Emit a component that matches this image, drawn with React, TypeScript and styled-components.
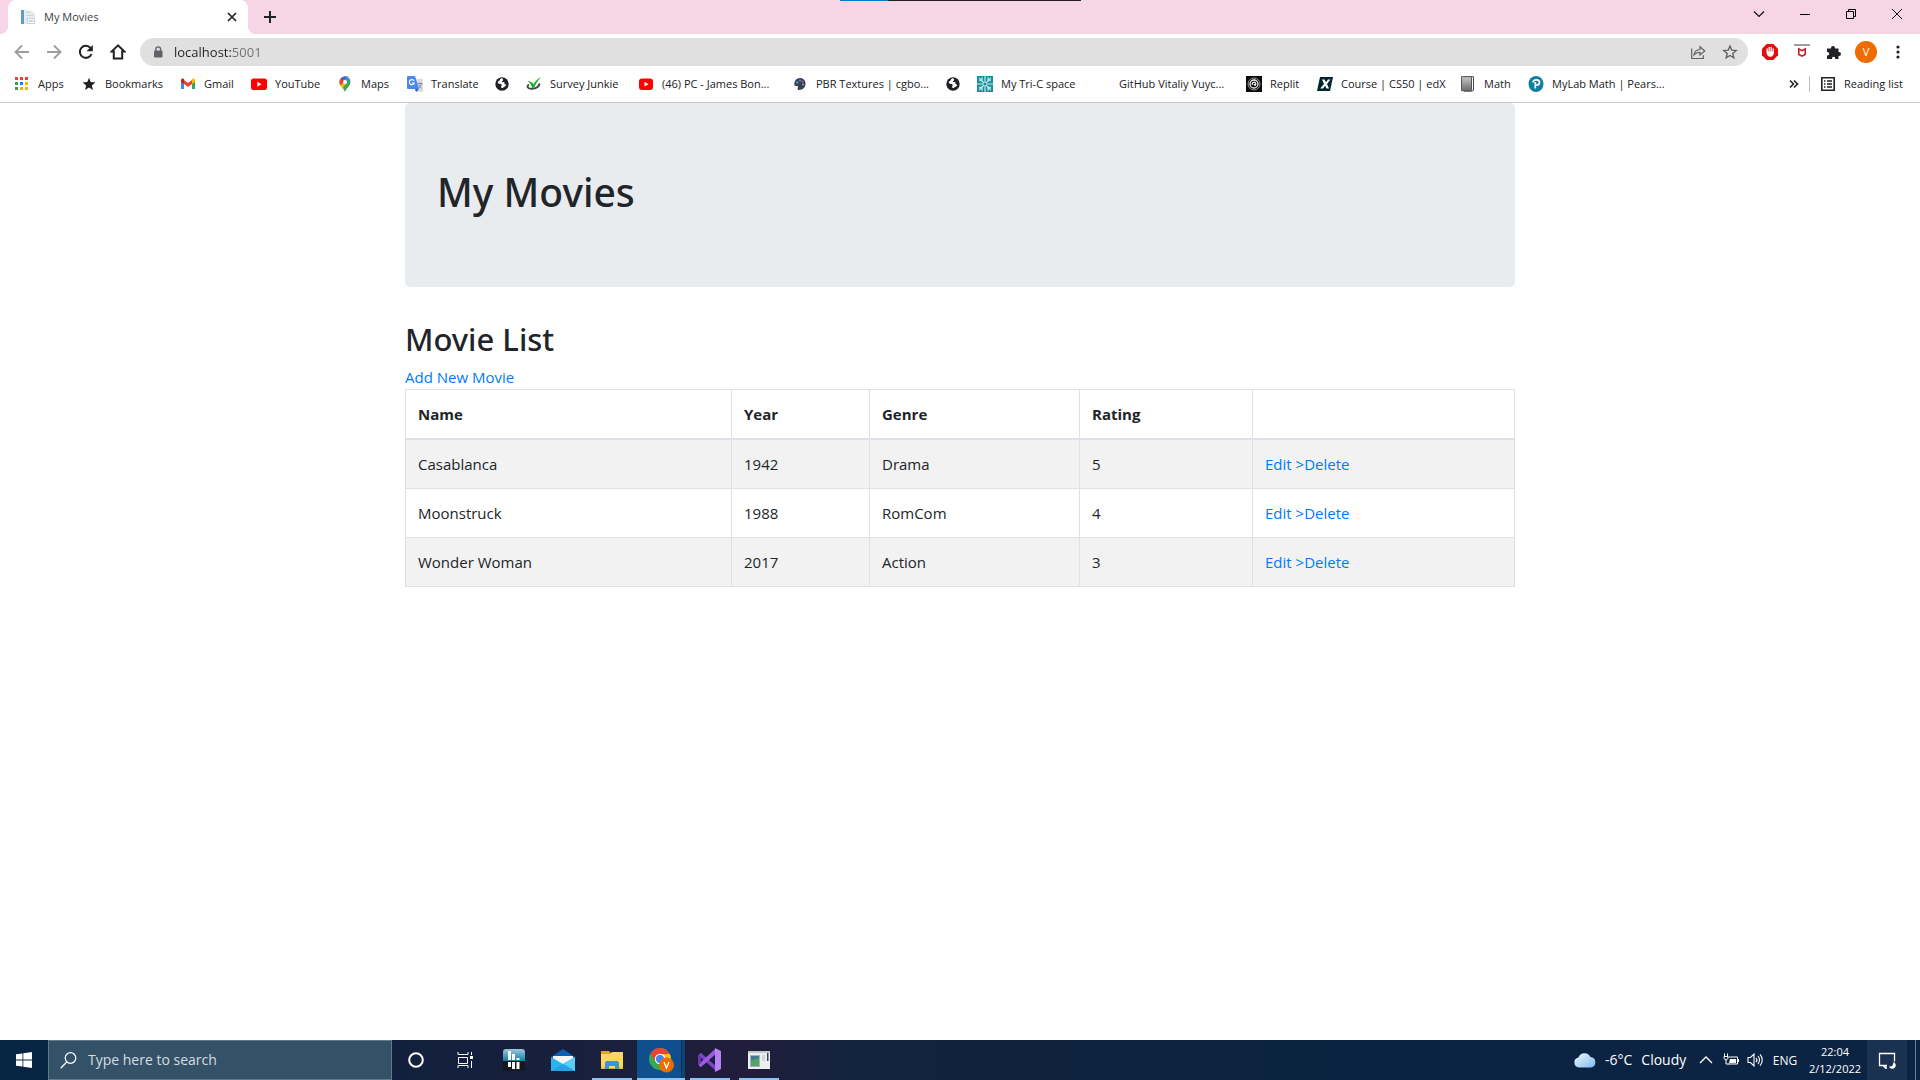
import React from 'react';
import styled, { createGlobalStyle } from 'styled-components';

const GlobalStyle = createGlobalStyle`
  *, *::before, *::after { box-sizing: border-box; }
  body {
    margin: 0;
    background: #fff;
    color: #212529;
    font-family: "Segoe UI", "Open Sans", "Noto Sans", sans-serif;
    font-size: 15px;
    line-height: 24px;
  }
  button, input { font: inherit; color: inherit; }
  svg { display: block; flex: none; }
`;

const Screen = styled.div`
  display: flex;
  flex-direction: column;
  min-height: 100vh;
`;

/* ---------- Browser window ---------- */

const TabStrip = styled.header`
  display: flex;
  align-items: flex-end;
  height: 34px;
  padding-left: 8px;
  background: #f6d5e4;
  position: relative;
`;

const LoadStrip = styled.div`
  position: absolute;
  top: 0;
  left: 43.75%;
  width: 241px;
  height: 1px;
  background: linear-gradient(90deg, #0078d7 48px, #231f20 48px);
`;

const Tab = styled.div`
  position: relative;
  display: flex;
  align-items: center;
  gap: 8px;
  width: 240px;
  height: 34px;
  padding: 0 8px 0 12px;
  border-radius: 8px 8px 0 0;
  background: #fff;
  font-size: 11px;
  color: #3c4043;

  &::before, &::after {
    content: "";
    position: absolute;
    bottom: 0;
    width: 8px;
    height: 8px;
  }
  &::before {
    left: -8px;
    background: radial-gradient(circle at 0 0, transparent 8px, #fff 8px);
  }
  &::after {
    right: -8px;
    background: radial-gradient(circle at 100% 0, transparent 8px, #fff 8px);
  }
`;

const TabTitle = styled.span`
  flex: 1;
`;

const IconButton = styled.button<{ $w?: number; $h?: number }>`
  display: flex;
  align-items: center;
  justify-content: center;
  flex: none;
  width: ${p => p.$w ?? 32}px;
  height: ${p => p.$h ?? 28}px;
  padding: 0;
  border: 0;
  background: none;
  color: #202124;
`;

const TabTools = styled.div`
  display: flex;
  align-items: center;
  flex: 1;
  height: 34px;
  padding-left: 6px;
`;

const WindowControls = styled.div`
  display: flex;
  align-self: flex-start;
`;

const Toolbar = styled.div`
  display: flex;
  align-items: center;
  height: 36px;
  padding: 0 6px;
`;

const AddressBar = styled.form`
  display: flex;
  align-items: center;
  flex: 1;
  height: 28px;
  margin: 0 6px;
  padding: 0 2px 0 12px;
  border-radius: 14px;
  background: #e0e0e0;
  color: #5f6368;
`;

const AddressInput = styled.input`
  flex: 1;
  min-width: 0;
  height: 24px;
  margin-left: 10px;
  padding: 0;
  border: 0;
  outline: 0;
  font-size: 13px;
  color: transparent;
  background: linear-gradient(90deg, #202124 57px, #6b6f73 57px);
  -webkit-background-clip: text;
  background-clip: text;
`;

const Avatar = styled.span`
  width: 22px;
  height: 22px;
  border-radius: 50%;
  background: #ef6c00;
  color: #fff;
  font-size: 11px;
  line-height: 22px;
  text-align: center;
`;

const BookmarkBar = styled.nav`
  display: flex;
  align-items: center;
  gap: 16px;
  height: 33px;
  padding: 0 14px 4px;
  border-bottom: 1px solid #c8c8c8;
  font-size: 11px;
`;

const Bookmark = styled.a<{ $label?: number }>`
  display: flex;
  align-items: center;
  gap: 8px;
  flex: none;
  padding: 0;
  border: 0;
  background: none;
  color: #202124;
  text-decoration: none;
  text-align: left;
  white-space: nowrap;

  span { width: ${p => p.$label ?? 0}px; }
`;

const BarEnd = styled.div`
  display: flex;
  align-items: center;
  gap: 10px;
  margin-left: auto;
`;

const Divider = styled.span`
  width: 1px;
  height: 16px;
  background: #bdc1c6;
`;

/* ---------- Page ---------- */

const Main = styled.main`
  flex: 1;
  width: 100%;
  max-width: 1110px;
  margin: 0 auto;
`;

const Jumbotron = styled.section`
  margin-bottom: 32px;
  padding: 64px 32px 72px;
  border-radius: 5px;
  background: #e9ecef;
`;

const Title = styled.h1`
  margin: 0;
  font-family: "Segoe UI", "Noto Sans", "Open Sans", sans-serif;
  font-size: 39px;
  font-weight: 500;
  line-height: 50px;
  height: 48px;
`;

const Subtitle = styled.h2`
  margin: 0 0 6px;
  font-family: "Segoe UI", "Noto Sans", "Open Sans", sans-serif;
  font-size: 31px;
  font-weight: 500;
  line-height: 40px;
`;

const PageLink = styled.a`
  color: #007bff;
  text-decoration: none;
`;

const MovieTable = styled.table`
  width: 100%;
  border-collapse: collapse;
  table-layout: fixed;

  th, td {
    height: 49px;
    padding: 12px;
    border: 1px solid #dee2e6;
    text-align: left;
  }
  th { border-bottom-width: 2px; font-weight: 700; }
  tbody tr:nth-child(odd) { background: #f2f2f2; }
`;

const Col = styled.col<{ $share?: number }>`
  width: ${p => (p.$share ? `${p.$share}px` : 'auto')};
`;

/* ---------- Taskbar ---------- */

const TaskBar = styled.footer`
  display: flex;
  height: 40px;
  background: linear-gradient(90deg, #062644 0%, #12203e 21%, #1b1f3c 34%, #211d3b 39%, #12233e 44%, #0b2340 70%, #0c2444 100%);
  color: #fff;
`;

const SearchBox = styled.label`
  display: flex;
  align-items: center;
  gap: 11px;
  width: 344px;
  padding-left: 11px;
  border: 1px solid #607b8a;
  background: #345267;
`;

const SearchInput = styled.input`
  flex: 1;
  min-width: 0;
  padding: 0;
  border: 0;
  outline: 0;
  background: none;
  font-size: 14px;
  &::placeholder { color: #d6dde2; opacity: 1; }
`;

const TaskButtons = styled.div`
  display: flex;
  gap: 1px;
`;

const TaskButton = styled.button<{ $open?: boolean; $active?: boolean }>`
  display: flex;
  align-items: center;
  justify-content: center;
  width: 48px;
  height: 40px;
  padding: 0;
  border: 0;
  color: #fff;
  background:
    linear-gradient(#8dc2f2, #8dc2f2) bottom / ${p => (p.$active ? '48px' : p.$open ? '40px' : '0')} 2px no-repeat,
    ${p => (p.$active ? 'linear-gradient(90deg, #104f8d 44px, #0b2c54 44px, #0b2c54 45px, #104475 45px)' : 'none')};
`;

const Tray = styled.div`
  display: flex;
  align-items: center;
  margin-left: auto;
`;

const Weather = styled.button`
  display: flex;
  align-items: center;
  gap: 9px;
  width: 119px;
  padding: 0;
  border: 0;
  background: none;
  font-size: 14px;
  color: #fff;
  white-space: nowrap;
`;

const TrayButton = styled.button<{ $w: number; $size?: number }>`
  display: flex;
  align-items: center;
  justify-content: center;
  width: ${p => p.$w}px;
  height: 40px;
  padding: 0;
  border: 0;
  background: none;
  font-size: ${p => p.$size ?? 11}px;
  line-height: 17px;
  color: #fff;
`;

const Notifications = styled(TrayButton)`
  background: #1b3150;
`;

const ShowDesktop = styled.button`
  width: 5px;
  height: 40px;
  margin-left: 8px;
  padding: 0;
  border: 0;
  border-left: 1px solid #6d7d92;
  background: none;
`;

/* ---------- Icons ---------- */

const Icon = ({ size = 16, box = 16, children }: { size?: number; box?: number; children: React.ReactNode }) => (
  <svg width={size} height={size} viewBox={`0 0 ${box} ${box}`} fill="none" aria-hidden="true">{children}</svg>
);

const PageFavicon = () => (
  <Icon>
    <path d="M1 1h3v14H1z" fill="#5b9dc4" /><path d="M4 1h7l4 4v10H4z" fill="#e9ebee" />
    <path d="M6 3.500h5M6 6.500h8M6 9.500h2" stroke="#ccd2d9" /><path d="M7.500 9.500h7v5h-7z" fill="#f8f9fa" stroke="#c9cfda" />
    <path d="M9 12h4" stroke="#a4abc6" />
  </Icon>
);

const AppsIcon = () => {
  const colors = ['#ea4335', '#ea4335', '#ea4335', '#34a04f', '#1a82f7', '#fbb000', '#34a04f', '#fbb000', '#fbb000'];
  return (
    <Icon>
      {colors.map((c, i) => <rect key={i} x={1 + (i % 3) * 5} y={1 + Math.floor(i / 3) * 5} width="3" height="3" fill={c} />)}
    </Icon>
  );
};

const StarIcon = () => <Icon><path d="M8 1.800l1.700 4.300 4.700.300-3.600 3L12 14l-4-2.500L4 14l1.200-4.600-3.600-3 4.700-.300z" fill="#202124" /></Icon>;

const GmailIcon = () => (
  <Icon>
    <path d="M1 4.500V13h3V7z" fill="#4285f4" /><path d="M15 4.500V13h-3V7z" fill="#34a853" />
    <path d="M4 4v4l4 3 4-3V4L8 7z" fill="#ea4335" /><path d="M1 4.200C1 2.500 2.900 2.200 4 3.100V8L1 5.700z" fill="#c5221f" />
    <path d="M15 4.200c0-1.700-1.900-2-3-1.100V8l3-2.300z" fill="#fbbc04" />
  </Icon>
);

const YouTubeIcon = () => <Icon><rect y="2.500" width="16" height="11.500" rx="2.500" fill="#f00" /><path d="M6.300 5.700v5l4.200-2.500z" fill="#fff" /></Icon>;

const YouTubeTileIcon = () => <Icon><rect x="1" y="2.500" width="14" height="11.500" rx="3" fill="#f00" /><path d="M6.500 5.800v4.800l4-2.400z" fill="#fff" /></Icon>;

const MapsIcon = () => (
  <Icon>
    <path d="M8 .5A5.500 5.500 0 002.500 6c0 4 4 5.500 5.500 10 1.500-4.500 5.500-6 5.500-10A5.500 5.500 0 008 .5z" fill="#34a853" />
    <path d="M3.800 9.600L11.600.5 8 .4A5.500 5.500 0 002.500 6c0 1.400.5 2.600 1.300 3.600z" fill="#ea4335" />
    <path d="M8 .5A5.500 5.500 0 003.900 2.300L6.500 4.600 9.700.8z" fill="#1a73e8" />
    <path d="M9.700.8L6.600 4.500a2.100 2.100 0 013 3l3.200-4A5.500 5.500 0 009.700.8z" fill="#4285f4" />
    <path d="M3.800 9.600l2.800-3.300L9.600 7.500l-4.200 4.700z" fill="#fbbc04" />
    <circle cx="8" cy="6" r="2" fill="#fff" />
  </Icon>
);

const TranslateIcon = () => (
  <Icon>
    <path d="M5 3h10a1 1 0 011 1v11a1 1 0 01-1 1H9z" fill="#dadce0" /><path d="M1 0h7l4 13H1a1 1 0 01-1-1V1a1 1 0 011-1z" fill="#4a87ee" />
    <path d="M8 13h4l-3 3z" fill="#2a56c6" />
    <path d="M7 4.800A2.500 2.500 0 107.200 7H5" stroke="#fff" strokeWidth="1.200" />
    <path d="M10.500 7.500H15M12.700 6.500v1M14.200 8c-.5 2-1.700 3.300-3 4M11.500 9c.8 1.500 1.800 2.500 3 3.200" stroke="#7b8794" />
  </Icon>
);

const GlobeIcon = () => (
  <Icon>
    <circle cx="8" cy="8" r="6.700" fill="#202124" />
    <path d="M6.800 2.500c-1.300.8-.5 2-2 2.600-1.200.5-1.400 1.800-.3 2.500 1 .6 2 .1 3 1 .8.800-.7 1.500-.3 2.600.3.900 1.200 1.300 2.200.4 1-.9 2.400-.9 2.600-2.300.1-1-1-.9-1.600-1.500-.5-.5.800-1.200-.2-1.700-.8-.4-1.500.5-2.100-.1-.8-.8 1.200-1.200 1-2.300-.1-.8-1.400-1.700-2.300-1.200z" fill="#fff" />
  </Icon>
);

const SurveyIcon = () => (
  <Icon>
    <path d="M3 8.500C0 10.500 2 13 6 12.800c4.500-.2 8-3 7-5.300" stroke="#454545" strokeWidth="2" />
    <path d="M1.500 4.500L6 6.500l1.500 1.800C9 5.500 11.500 3 15 1c-3 3.300-5 6.500-7 11l-1.500.5C5.500 9.500 4 7 1.500 4.500z" fill="#18b128" />
  </Icon>
);

const PaletteIcon = () => (
  <Icon>
    <path d="M8 2A6 5.500 0 002.500 6.500C1.500 9.500 3 10.300 4.500 10c1.800-.3 1.700 1 1.200 2.200-.7 1.600.8 2 2.800 1.600C12 13.200 13.500 10.500 13.500 7.500 13.500 4.300 11 2 8 2z" fill="#34425a" />
    <circle cx="5.200" cy="6.500" r="1" fill="#8ca1bb" /><circle cx="8" cy="4.500" r="1" fill="#5b93c8" />
    <circle cx="10.500" cy="5.500" r="1" fill="#c95c68" /><circle cx="11" cy="8.500" r="1" fill="#8ca1bb" />
  </Icon>
);

const TriCIcon = () => (
  <Icon>
    <path d="M0 0h16v16H0z" fill="#168e9a" />
    <path d="M8 0v16M0 8h16M2 2l12 12M14 2L2 14M5 1v3l-3 1M11 1v3l3 1M5 15v-3l-3-1M11 15v-3l3-1" stroke="#d3f0f2" strokeWidth="1.100" />
    <circle cx="8" cy="8" r="1.500" fill="#168e9a" />
  </Icon>
);

const BlankIcon = () => <Icon><path d="M0 0h16v16H0z" fill="#fff" /></Icon>;

const ReplitIcon = () => (
  <Icon>
    <path d="M0 0h16v16H0z" fill="#0a0a0a" />
    <circle cx="8" cy="8" r="6" stroke="#9a9a9a" strokeWidth="1" /><circle cx="8" cy="8" r="4" stroke="#eee" strokeWidth="1.300" />
    <path d="M6.500 9a1.800 1.800 0 112.500.5L8 8" stroke="#fff" strokeWidth="1.200" />
  </Icon>
);

const EdxIcon = () => (
  <Icon>
    <path d="M3 1h13l-3 14H0z" fill="#02262b" />
    <path d="M5 3.500h2.500L9 6.300l2-2.800h2.500L10 8l2 4.500H9.500L8.200 9.700 6 12.500H3.200L7 8z" fill="#fff" />
  </Icon>
);

const MathIcon = () => (
  <Icon>
    <defs><linearGradient id="math" x2="0" y2="1"><stop stopColor="#c8c8c8" /><stop offset="1" stopColor="#6b6b6b" /></linearGradient></defs>
    <path d="M4 .7h9.500v13.500l-2 1H4z" fill="#fff" stroke="#444" /><path d="M1.500.7h10v14h-10z" fill="url(#math)" stroke="#555" />
  </Icon>
);

const PearsonIcon = () => (
  <Icon>
    <ellipse cx="8" cy="8" rx="7.500" ry="8" fill="#117ea3" />
    <path d="M5 6.500c0-1.700 1.500-2.700 3.300-2.700 2 0 3.200 1 3.200 2.600S10.200 9 8.500 9H8M7.300 6v6.500" stroke="#fff" strokeWidth="1.700" />
  </Icon>
);

const ReadingListIcon = () => (
  <Icon>
    <path d="M1.800 1.800h12.400v12.400H1.800z" stroke="#202124" strokeWidth="1.600" />
    <path d="M4 5h1.500M7 5h5M4 8h1.500M7 8h5M4 11h1.500M7 11h5" stroke="#202124" strokeWidth="1.500" />
  </Icon>
);

const bookmarks: { label: string; name?: string; width?: number; icon: React.ReactNode }[] = [
  { label: 'Apps', width: 27, icon: <AppsIcon /> },
  { label: 'Bookmarks', width: 59, icon: <StarIcon /> },
  { label: 'Gmail', width: 31, icon: <GmailIcon /> },
  { label: 'YouTube', width: 46, icon: <YouTubeIcon /> },
  { label: 'Maps', width: 30, icon: <MapsIcon /> },
  { label: 'Translate', width: 47, icon: <TranslateIcon /> },
  { label: '', name: 'Website', icon: <GlobeIcon /> },
  { label: 'Survey Junkie', width: 72, icon: <SurveyIcon /> },
  { label: '(46) PC - James Bon...', width: 114, icon: <YouTubeTileIcon /> },
  { label: 'PBR Textures | cgbo...', width: 113, icon: <PaletteIcon /> },
  { label: '', name: 'Website', icon: <GlobeIcon /> },
  { label: 'My Tri-C space', width: 78, icon: <TriCIcon /> },
  { label: 'GitHub Vitaliy Vuyc...', width: 111, icon: <BlankIcon /> },
  { label: 'Replit', width: 31, icon: <ReplitIcon /> },
  { label: 'Course | CS50 | edX', width: 103, icon: <EdxIcon /> },
  { label: 'Math', width: 28, icon: <MathIcon /> },
  { label: 'MyLab Math | Pears...', width: 112, icon: <PearsonIcon /> },
];

const movies = [
  { name: 'Casablanca', year: 1942, genre: 'Drama', rating: 5 },
  { name: 'Moonstruck', year: 1988, genre: 'RomCom', rating: 4 },
  { name: 'Wonder Woman', year: 2017, genre: 'Action', rating: 3 },
];

const BrowserChrome = () => (
  <>
    <TabStrip>
      <Tab>
        <PageFavicon />
        <TabTitle>My Movies</TabTitle>
        <IconButton $w={16} $h={16} aria-label="Close tab">
          <Icon><path d="M4 4l8 8M12 4l-8 8" stroke="#202124" strokeWidth="1.700" /></Icon>
        </IconButton>
      </Tab>
      <TabTools>
        <IconButton aria-label="New tab">
          <Icon><path d="M8 2v12M2 8h12" stroke="#202124" strokeWidth="2" /></Icon>
        </IconButton>
      </TabTools>
      <WindowControls>
        <IconButton $w={46} aria-label="Search tabs"><Icon><path d="M3 5.500l5 5 5-5" stroke="#111" strokeWidth="1.200" /></Icon></IconButton>
        <IconButton $w={46} aria-label="Minimize"><Icon><path d="M3 8.500h10" stroke="#000" /></Icon></IconButton>
        <IconButton $w={46} aria-label="Restore"><Icon><path d="M3.500 5.500h7v7h-7zM5.500 5.500v-2h7v7h-2" stroke="#000" /></Icon></IconButton>
        <IconButton $w={46} aria-label="Close"><Icon><path d="M3 3l10 10M13 3L3 13" stroke="#111" /></Icon></IconButton>
      </WindowControls>
      <LoadStrip />
    </TabStrip>
    <Toolbar>
      <IconButton aria-label="Back"><Icon><path d="M15 8H2M8 1.500L1.500 8 8 14.500" stroke="#9b9ea1" strokeWidth="1.800" /></Icon></IconButton>
      <IconButton aria-label="Forward"><Icon><path d="M1 8h13M8 1.500L14.500 8 8 14.500" stroke="#9b9ea1" strokeWidth="1.800" /></Icon></IconButton>
      <IconButton aria-label="Reload">
        <Icon><path d="M13.500 10A6 6 0 1112.500 4" stroke="#202124" strokeWidth="2" /><path d="M14.800 1v6.300H8.500z" fill="#202124" /></Icon>
      </IconButton>
      <IconButton aria-label="Home">
        <Icon><path d="M8 1.400L1.600 7.500h2.200v7h8.400v-7h2.200z" stroke="#202124" strokeWidth="2" /></Icon>
      </IconButton>
      <AddressBar>
        <Icon size={12} box={12}>
          <rect x="2" y="4.500" width="8.500" height="7" rx="1" fill="#5f6368" />
          <path d="M3.800 5V3.200a2.400 2.400 0 014.800 0V5" stroke="#5f6368" strokeWidth="1.300" />
        </Icon>
        <AddressInput aria-label="Address" defaultValue="localhost:5001" />
        <IconButton type="button" aria-label="Share">
          <Icon><path d="M1.700 4.500v10h11.600v-3.300M4 11c.4-3.500 2.500-5.300 6-5.500V2.700L14.800 7 10 11V8.300C7.500 8.200 5.600 9 4 11z" stroke="#5f6368" strokeWidth="1.200" /></Icon>
        </IconButton>
        <IconButton type="button" aria-label="Bookmark this tab">
          <Icon><path d="M8 2l1.700 4.100 4.500.4-3.400 2.900 1 4.400L8 11.500l-3.800 2.300 1-4.400L1.800 6.500l4.500-.4z" stroke="#5f6368" strokeWidth="1.400" /></Icon>
        </IconButton>
      </AddressBar>
      <IconButton aria-label="Ad blocker">
        <Icon>
          <path d="M4.700 0h6.600L16 4.700v6.600L11.300 16H4.700L0 11.300V4.700z" fill="#e40d0d" />
          <path d="M5.200 8V5M7.200 8V3.500M9.200 8V3.500M11.200 9V5" stroke="#fff" strokeWidth="1.300" strokeLinecap="round" /><path d="M4.500 7.500h7.300c0 3.300-1 5.300-3.400 5.300s-3.900-2-3.900-5.300z" fill="#fff" />
        </Icon>
      </IconButton>
      <IconButton aria-label="Web protection">
        <Icon><path d="M0 0h16v2H0z" fill="#9e9ea0" /><path d="M4.800 4.800v5.700L8 12l3.200-1.500V4.800L8 6.600z" stroke="#c8202f" strokeWidth="1.600" /></Icon>
      </IconButton>
      <IconButton aria-label="Extensions">
        <Icon><path d="M1 4.500h4V4a2 2 0 014 0v.5h3.500V8H13a2 2 0 010 4h-.5v3H9.300v-.5a1.700 1.700 0 00-3.400 0v.5H1v-3.500h.5a1.700 1.700 0 000-3.400H1z" fill="#202124" /></Icon>
      </IconButton>
      <IconButton aria-label="Profile"><Avatar>V</Avatar></IconButton>
      <IconButton aria-label="Menu">
        <Icon><circle cx="8" cy="3" r="1.600" fill="#202124" /><circle cx="8" cy="8" r="1.600" fill="#202124" /><circle cx="8" cy="13" r="1.600" fill="#202124" /></Icon>
      </IconButton>
    </Toolbar>
    <BookmarkBar aria-label="Bookmarks">
      {bookmarks.map((b, i) => (
        <Bookmark key={i} href="#" aria-label={b.name} $label={b.width}>
          {b.icon}
          {b.label && <span>{b.label}</span>}
        </Bookmark>
      ))}
      <BarEnd>
        <IconButton $w={10} $h={16} aria-label="More bookmarks">
          <Icon size={10} box={10}><path d="M1 1.500L4.500 5 1 8.500M5 1.500L8.500 5 5 8.500" stroke="#202124" strokeWidth="1.600" /></Icon>
        </IconButton>
        <Divider />
        <Bookmark as="button" $label={62}>
          <ReadingListIcon />
          <span>Reading list</span>
        </Bookmark>
      </BarEnd>
    </BookmarkBar>
  </>
);

const MoviesPage = () => (
  <Main>
    <Jumbotron><Title>My Movies</Title></Jumbotron>
    <Subtitle>Movie List</Subtitle>
    <PageLink href="#">Add New Movie</PageLink>
    <MovieTable>
      <colgroup><Col $share={326} /><Col $share={138} /><Col $share={210} /><Col $share={173} /><Col /></colgroup>
      <thead>
        <tr><th>Name</th><th>Year</th><th>Genre</th><th>Rating</th><th aria-label="Actions" /></tr>
      </thead>
      <tbody>
        {movies.map(m => (
          <tr key={m.name}>
            <td>{m.name}</td><td>{m.year}</td><td>{m.genre}</td><td>{m.rating}</td>
            <td><PageLink href="#">Edit &gt;</PageLink><PageLink href="#">Delete</PageLink></td>
          </tr>
        ))}
      </tbody>
    </MovieTable>
  </Main>
);

const WindowsTaskbar = () => (
  <TaskBar>
    <TaskButton aria-label="Start">
      <Icon><path d="M0 2.300L6.500 1.400v6.200H0zM7.300 1.300L16 0v7.600H7.300zM0 8.400h6.500v6.200L0 13.700zM7.300 8.400H16V16l-8.700-1.200z" fill="#fff" /></Icon>
    </TaskButton>
    <SearchBox>
      <Icon size={17} box={17}><circle cx="10.500" cy="6" r="5.300" stroke="#fff" strokeWidth="1.200" /><path d="M6.700 10L.7 16.300" stroke="#fff" strokeWidth="1.300" /></Icon>
      <SearchInput placeholder="Type here to search" aria-label="Type here to search" />
    </SearchBox>
    <TaskButtons>
      <TaskButton aria-label="Cortana"><Icon><circle cx="8" cy="8" r="6.800" stroke="#fff" strokeWidth="2" /></Icon></TaskButton>
      <TaskButton aria-label="Task view">
        <Icon><path d="M1 0v2.500h10V0M1.500 5.500h9v6h-9zM1 16v-2.500h10V16M14.500 0v3M14.500 9v7" stroke="#fff" /><path d="M13 4h3v3h-3z" fill="#fff" /></Icon>
      </TaskButton>
      <TaskButton aria-label="Audio mixer">
        <Icon size={22} box={22}>
          <defs>
            <linearGradient id="mixTop" x2="0" y2="1"><stop stopColor="#9cc8dc" /><stop offset="1" stopColor="#147aa8" /></linearGradient>
          </defs>
          <rect width="22" height="22" rx="3" fill="#15191d" /><path d="M0 12V3a3 3 0 013-3h16a3 3 0 013 3v9z" fill="url(#mixTop)" />
          <path d="M6.500 2v9M10.500 5v6M15 9v2M6.500 13v5M10.500 13v7M15 13v7" stroke="#fff" strokeWidth="3" />
        </Icon>
      </TaskButton>
      <TaskButton aria-label="Mail">
        <Icon size={24} box={24}>
          <path d="M0 9l12-8 12 8v3H0z" fill="#0d5fb3" /><path d="M2 8h20v9H2z" fill="#f4f6f8" />
          <path d="M0 9l12 7 12-7v14H0z" fill="#2bb5ee" /><path d="M12 16l12-7v14z" fill="#58cdf8" /><path d="M0 23l12-7 12 7z" fill="#27a1e6" />
        </Icon>
      </TaskButton>
      <TaskButton $open aria-label="File Explorer">
        <Icon size={22} box={22}>
          <path d="M0 2h8l2 2h12v16H0z" fill="#e6a41a" /><path d="M0 5h9l2-2h11v16H0z" fill="#fdd667" />
          <path d="M4 20v-6a2 2 0 012-2h10a2 2 0 012 2v6h-4v-3H8v3z" fill="#3c93d5" /><path d="M0 18h4v2H0zM18 18h4v2h-4z" fill="#f3bd42" />
        </Icon>
      </TaskButton>
      <TaskButton $active aria-label="Google Chrome">
        <Icon size={26} box={26}>
          <circle cx="12" cy="12" r="11" fill="#34a853" /><path d="M2.500 6.500A11 11 0 0121.500 6.500L22 7H12L7 14z" fill="#ea4335" />
          <path d="M12 7h9.800A11 11 0 0112 23l5-9z" fill="#fbc116" />
          <circle cx="12" cy="12" r="5.200" fill="#fff" /><circle cx="12" cy="12" r="4.200" fill="#4285f4" />
          <circle cx="18.500" cy="18" r="7.500" fill="#ed6c00" /><path d="M16 15l2.500 6L21 15" stroke="#fff" strokeWidth="1.300" />
        </Icon>
      </TaskButton>
      <TaskButton $open aria-label="Visual Studio">
        <Icon size={24} box={24}>
          <path d="M1 6l2-1 14 12v5L1 8z" fill="#7b42c8" /><path d="M1 18l2 1L17 7V1L1 16z" fill="#9c5ce2" />
          <path d="M0 7l3 2v6l-3 2z" fill="#6b35ad" /><path d="M17 0l6 3v18l-6 3z" fill="#b882f2" /><path d="M17 7v10l-6-5z" fill="#211d3b" />
        </Icon>
      </TaskButton>
      <TaskButton $open aria-label="Web server console">
        <Icon size={22} box={22}>
          <path d="M0 2h22v18H0z" fill="#eceeee" /><path d="M0 2h22v2H0z" fill="#c2c9cc" /><path d="M2 6h10v12H2z" fill="#a5b0b8" />
          <path d="M3 7h8v10H3z" fill="#3f7d8c" /><path d="M3 12l8-3v8H3z" fill="#54a36a" />
          <path d="M14 7h3M14 9h3M14 11h3" stroke="#b5bbc0" /><path d="M19 4h1.500v8H19z" fill="#30465c" />
        </Icon>
      </TaskButton>
    </TaskButtons>
    <Tray>
      <Weather>
        <Icon size={22} box={22}>
          <defs><linearGradient id="cloud" x2="1" y2="1"><stop stopColor="#f3faff" /><stop offset="1" stopColor="#7bb9ec" /></linearGradient></defs>
          <path d="M5 18.500a5 5 0 01-.6-9.900A6.500 6.500 0 0116.500 8a5.300 5.300 0 01.5 10.500z" fill="url(#cloud)" />
        </Icon>
        <span>-6°C</span><span>Cloudy</span>
      </Weather>
      <TrayButton $w={26} aria-label="Show hidden icons"><Icon><path d="M2 11l6-6 6 6" stroke="#fff" strokeWidth="1.300" /></Icon></TrayButton>
      <TrayButton $w={24} aria-label="Battery">
        <Icon><path d="M5.500 5h9v7h-9M15.500 7v3" stroke="#fff" /><path d="M7 7h6v4H6z" fill="#fff" /><path d="M1.500 1.500v3M4.500 1.500v3M1 4.500h4v2L3 8 1 6.500zM3 8v4h3" stroke="#fff" /></Icon>
      </TrayButton>
      <TrayButton $w={24} aria-label="Volume">
        <Icon><path d="M1 5.500h2.500L7 2v12L3.500 10.500H1zM9 6c1 1.200 1 3 0 4M11 4c2 2.300 2 6 0 8M13 2.300c3 3.200 3 8.200 0 11.400" stroke="#fff" strokeWidth="1.100" /></Icon>
      </TrayButton>
      <TrayButton $w={36} $size={12}>ENG</TrayButton>
      <TrayButton $w={64}><span>22:04<br />2/12/2022</span></TrayButton>
      <Notifications $w={40} aria-label="Notifications">
        <Icon size={18} box={18}><path d="M9 14.500H1.500v-12h15v8M5 14.500l3 3v-3" stroke="#fff" strokeWidth="1.300" /><path d="M15.500 11a3.500 3.500 0 11-4.500 4.500c3 .5 4.500-1.500 4.500-4.500z" fill="#fff" /></Icon>
      </Notifications>
      <ShowDesktop aria-label="Show desktop" />
    </Tray>
  </TaskBar>
);

export default function App() {
  return (
    <Screen>
      <GlobalStyle />
      <BrowserChrome />
      <MoviesPage />
      <WindowsTaskbar />
    </Screen>
  );
}
